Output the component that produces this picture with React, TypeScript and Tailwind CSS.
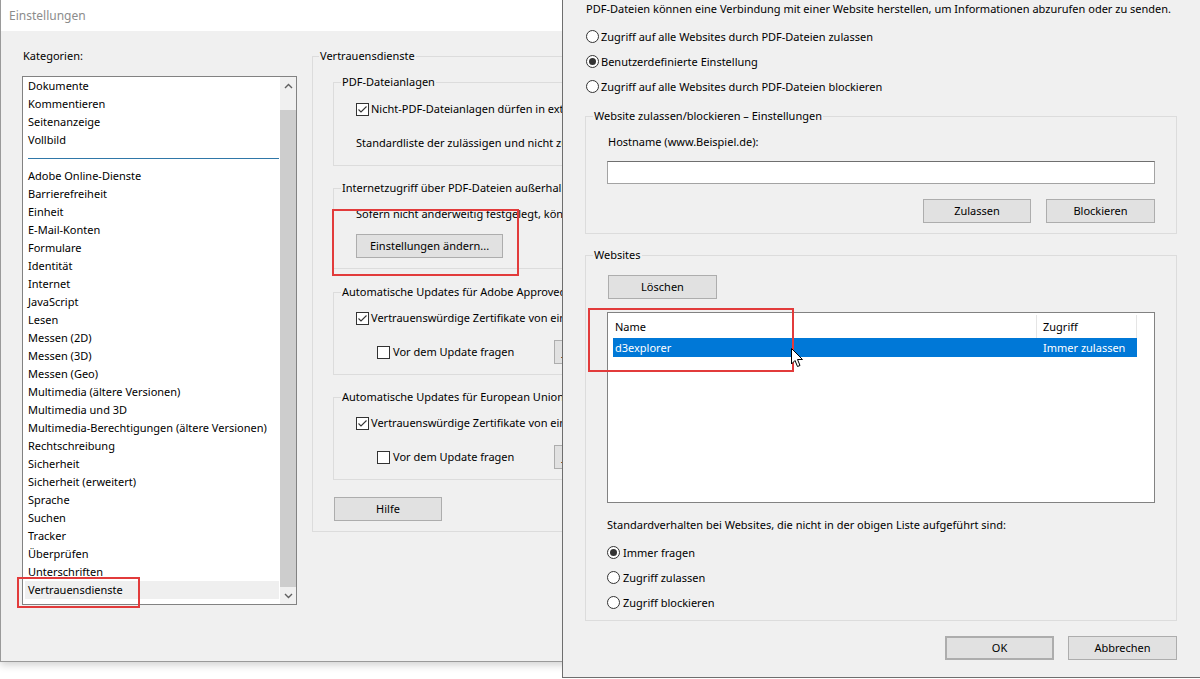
import React from "react"

const categories = [
  "Adobe Online-Dienste",
  "Barrierefreiheit",
  "Einheit",
  "E-Mail-Konten",
  "Formulare",
  "Identität",
  "Internet",
  "JavaScript",
  "Lesen",
  "Messen (2D)",
  "Messen (3D)",
  "Messen (Geo)",
  "Multimedia (ältere Versionen)",
  "Multimedia und 3D",
  "Multimedia-Berechtigungen (ältere Versionen)",
  "Rechtschreibung",
  "Sicherheit",
  "Sicherheit (erweitert)",
  "Sprache",
  "Suchen",
  "Tracker",
  "Überprüfen",
  "Unterschriften",
  "Vertrauensdienste",
]

function Checkbox({ checked }: { checked?: boolean }) {
  return (
    <span className="flex h-[13px] w-[13px] shrink-0 items-center justify-center border border-[#333333] bg-white">
      {checked && (
        <svg width="11" height="11" viewBox="0 0 11 11">
          <path d="M1.5 5.5 L4 8 L9.5 2.5" fill="none" stroke="#333333" strokeWidth="1.1" />
        </svg>
      )}
    </span>
  )
}

function Radio({ checked }: { checked?: boolean }) {
  return (
    <span className="flex h-[13px] w-[13px] shrink-0 items-center justify-center rounded-full border border-[#333333] bg-white">
      {checked && <span className="h-[7px] w-[7px] rounded-full bg-[#333333]" />}
    </span>
  )
}

function Button({ children, className = "" }: { children?: React.ReactNode; className?: string }) {
  return (
    <div
      className={
        "flex h-[24px] shrink-0 items-center justify-center border border-[#adadad] bg-[#e1e1e1] text-black " +
        className
      }
    >
      {children}
    </div>
  )
}

// Windows-Gruppenfeld: Rahmen läuft durch die Mitte der Beschriftung
function Group({
  label,
  className = "",
  innerClass = "",
  legendClass = "ml-[7px]",
  children,
}: {
  label: string
  className?: string
  innerClass?: string
  legendClass?: string
  children?: React.ReactNode
}) {
  return (
    <fieldset className={"min-w-0 border border-[#dcdcdc] " + className}>
      <legend className={"whitespace-nowrap px-[1px] " + legendClass}>{label}</legend>
      <div className={innerClass}>{children}</div>
    </fieldset>
  )
}

function Chevron({ up }: { up?: boolean }) {
  return (
    <svg width="9" height="6" viewBox="0 0 9 6">
      <path
        d={up ? "M1 5 L4.5 1.5 L8 5" : "M1 1 L4.5 4.5 L8 1"}
        fill="none"
        stroke="#606060"
        strokeWidth="1.4"
      />
    </svg>
  )
}

function SettingsWindow() {
  return (
    <div className="absolute left-0 top-0 flex h-[662px] w-[720px] flex-col overflow-hidden border-b border-l border-[#9a9a9a] bg-[#f0f0f0] shadow-[0_3px_8px_rgba(0,0,0,0.18)]">
      <div className="flex h-[31px] shrink-0 items-center bg-white pl-[8px] text-[12px] text-[#8c8c8c]">
        Einstellungen
      </div>

      <div className="flex items-start pl-[21px] pt-[16px]">
        {/* Kategorien */}
        <div className="flex w-[275px] shrink-0 flex-col">
          <div className="pl-[1px]">Kategorien:</div>
          <div className="mt-[11px] flex h-[529px] border border-[#828282] bg-white">
            <div className="flex-1 pl-[2px] pr-[1px]">
              {["Dokumente", "Kommentieren", "Seitenanzeige", "Vollbild"].map((c) => (
                <div key={c} className="h-[18px] whitespace-nowrap pl-[3px]">
                  {c}
                </div>
              ))}
              <div className="flex h-[18px] items-center pl-[3px]">
                <div className="h-px w-full bg-[#2f77a8]" />
              </div>
              {categories.map((c) => (
                <div
                  key={c}
                  className={
                    "h-[18px] whitespace-nowrap pl-[3px] " + (c === "Vertrauensdienste" ? "bg-[#efefef]" : "")
                  }
                >
                  {c}
                </div>
              ))}
            </div>
            <div className="flex w-[16px] shrink-0 flex-col bg-[#f0f0f0]">
              <div className="flex h-[17px] items-center justify-center">
                <Chevron up />
              </div>
              <div className="flex flex-1 flex-col justify-end">
                <div className="h-[477px] bg-[#cdcdcd]" />
              </div>
              <div className="flex h-[17px] items-center justify-center">
                <Chevron />
              </div>
            </div>
          </div>
        </div>

        {/* Vertrauensdienste */}
        <Group
          label="Vertrauensdienste"
          legendClass="ml-[6px]"
          className="ml-[15px] w-[400px] shrink-0"
          innerClass="pb-[10px] pl-[20px]"
        >
          <Group label="PDF-Dateianlagen" className="mt-[8px] w-[370px]" innerClass="pb-[13px] pl-[22px]">
            <div className="mt-[9px] flex h-[18px] items-center gap-[2px] whitespace-nowrap">
              <Checkbox checked />
              <span>Nicht-PDF-Dateianlagen dürfen in externen Anwendungen geöffnet werden</span>
            </div>
            <div className="mt-[16px] h-[18px] whitespace-nowrap">
              Standardliste der zulässigen und nicht zulässigen Dateianlagen wiederherstellen:
            </div>
          </Group>

          <Group
            label="Internetzugriff über PDF-Dateien außerhalb des Webbrowsers"
            className="mt-[13px] w-[370px]"
            innerClass="pb-[10px] pl-[22px]"
          >
            <div className="mt-[8px] h-[18px] whitespace-nowrap">
              Sofern nicht anderweitig festgelegt, können PDF-Dateien auf alle Websites zugreifen.
            </div>
            <Button className="mt-[11px] w-[147px]">Einstellungen ändern...</Button>
          </Group>

          <Group
            label="Automatische Updates für Adobe Approved Trust List (AATL)"
            className="mt-[14px] w-[370px]"
            innerClass="pb-[10px] pl-[22px]"
          >
            <div className="mt-[8px] flex h-[18px] items-center gap-[2px] whitespace-nowrap">
              <Checkbox checked />
              <span>Vertrauenswürdige Zertifikate von einem Adobe-Server laden</span>
            </div>
            <div className="mt-[13px] flex h-[24px] items-center whitespace-nowrap pl-[21px]">
              <div className="flex w-[177px] shrink-0 items-center gap-[3px]">
                <Checkbox />
                <span>Vor dem Update fragen</span>
              </div>
              <Button className="w-[108px]">Jetzt aktualisieren</Button>
            </div>
          </Group>

          <Group
            label="Automatische Updates für European Union Trusted Lists (EUTL)"
            className="mt-[13px] w-[370px]"
            innerClass="pb-[10px] pl-[22px]"
          >
            <div className="mt-[8px] flex h-[18px] items-center gap-[2px] whitespace-nowrap">
              <Checkbox checked />
              <span>Vertrauenswürdige Zertifikate von einem Adobe-Server laden</span>
            </div>
            <div className="mt-[13px] flex h-[24px] items-center whitespace-nowrap pl-[21px]">
              <div className="flex w-[177px] shrink-0 items-center gap-[3px]">
                <Checkbox />
                <span>Vor dem Update fragen</span>
              </div>
              <Button className="w-[108px]">Jetzt aktualisieren</Button>
            </div>
          </Group>

          <Button className="ml-px mt-[17px] w-[108px]">Hilfe</Button>
        </Group>
      </div>
    </div>
  )
}

function InternetDialog() {
  return (
    <div className="absolute left-[562px] top-0 h-[678px] w-[660px] border-b border-l border-[#6e6e6e] bg-[#f0f0f0] pl-[22px]">
      <div className="ml-px h-[18px] whitespace-nowrap">
        PDF-Dateien können eine Verbindung mit einer Website herstellen, um Informationen abzurufen oder zu senden.
      </div>
      <div className="ml-px mt-[6px] flex flex-col">
        {[
          ["Zugriff auf alle Websites durch PDF-Dateien zulassen", false],
          ["Benutzerdefinierte Einstellung", true],
          ["Zugriff auf alle Websites durch PDF-Dateien blockieren", false],
        ].map(([label, on]) => (
          <div key={label as string} className="flex h-[25px] items-center gap-[2px]">
            <Radio checked={on as boolean} />
            <span>{label}</span>
          </div>
        ))}
      </div>

      <Group
        label="Website zulassen/blockieren – Einstellungen"
        className="mt-[8px] w-[592px]"
        innerClass="pb-[10px] pl-[21px] pr-[21px]"
      >
        <div className="ml-px mt-[8px] h-[18px]">Hostname (www.Beispiel.de):</div>
        <div className="mt-[10px] h-[23px] border border-[#a3a3a3] border-t-[#6f6f6f] bg-white" />
        <div className="mt-[15px] flex justify-end gap-[15px]">
          <Button className="w-[108px]">Zulassen</Button>
          <Button className="w-[109px]">Blockieren</Button>
        </div>
      </Group>

      <Group label="Websites" className="mt-[12px] w-[592px]" innerClass="pb-[5px] pl-[21px]">
        <Button className="ml-px mt-[11px] w-[109px]">Löschen</Button>
        <div className="mt-[13px] h-[191px] w-[548px] border border-[#828282] bg-white pl-[5px] pt-[2px]">
          <div className="flex h-[23px]">
            <div className="flex w-[424px] items-center border-r border-[#e5e5e5] pl-[2px]">Name</div>
            <div className="flex w-[100px] items-center border-r border-[#e5e5e5] pl-[6px]">Zugriff</div>
          </div>
          <div className="flex h-[19px] w-[524px] bg-[#0078d7] text-white">
            <div className="flex w-[424px] items-center pl-[2px]">d3explorer</div>
            <div className="flex w-[100px] items-center pl-[6px]">Immer zulassen</div>
          </div>
        </div>
        <div className="mt-[13px] h-[18px] whitespace-nowrap">
          Standardverhalten bei Websites, die nicht in der obigen Liste aufgeführt sind:
        </div>
        <div className="mt-[6px] flex flex-col">
          {[
            ["Immer fragen", true],
            ["Zugriff zulassen", false],
            ["Zugriff blockieren", false],
          ].map(([label, on]) => (
            <div key={label as string} className="flex h-[25px] items-center gap-[3px]">
              <Radio checked={on as boolean} />
              <span>{label}</span>
            </div>
          ))}
        </div>
      </Group>

      <div className="mt-[15px] flex w-[592px] justify-end gap-[14px]">
        <Button className="w-[109px] border-2 border-[#0078d7]">OK</Button>
        <Button className="w-[109px]">Abbrechen</Button>
      </div>
    </div>
  )
}

export default function App() {
  return (
    <div className="relative h-[679px] w-[1200px] overflow-hidden bg-white font-['Noto_Sans',sans-serif] text-[11px] leading-[18px] text-black">
      <SettingsWindow />
      <InternetDialog />

      {/* Markierungen */}
      <div className="absolute left-[17px] top-[577px] h-[31px] w-[123px] border-2 border-[#e23b3b]" />
      <div className="absolute left-[332px] top-[209px] h-[67px] w-[187px] border-2 border-[#e23b3b]" />
      <div className="absolute left-[588px] top-[308px] h-[64px] w-[206px] border-2 border-[#e23b3b]" />

      {/* Mauszeiger */}
      <svg className="absolute left-[791px] top-[348px]" width="13" height="20" viewBox="0 0 13 20">
        <path
          d="M0.5 0.5 L0.5 16 L4 12.5 L6.5 18.5 L9 17.5 L6.5 11.5 L11.5 11.5 Z"
          fill="white"
          stroke="black"
          strokeWidth="1"
          strokeLinejoin="round"
        />
      </svg>
    </div>
  )
}
